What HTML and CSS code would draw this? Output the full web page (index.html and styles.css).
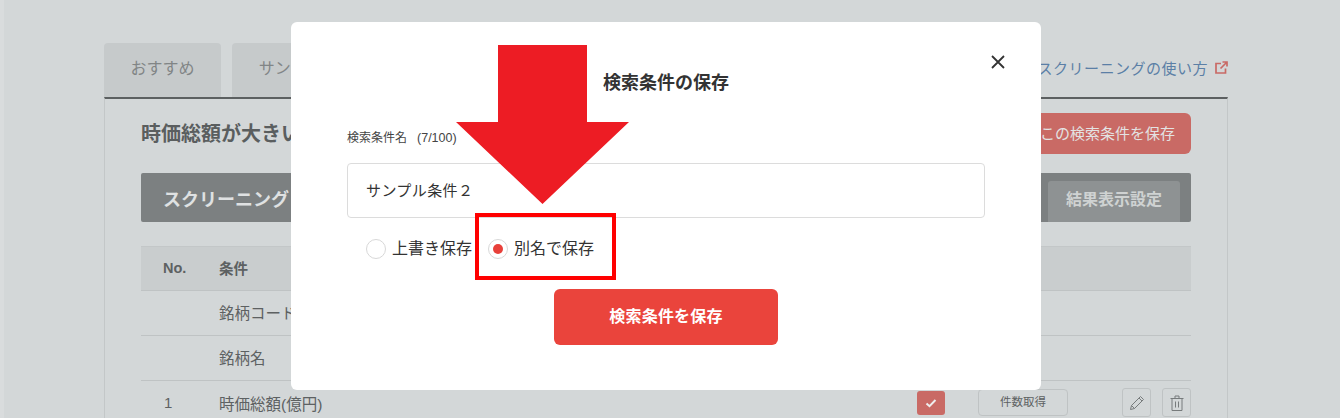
FILE: index.html
```html
<!DOCTYPE html>
<html lang="ja">
<head>
    <meta charset="UTF-8">
    <title>検索条件の保存</title>
    <link rel="stylesheet" href="styles.css">
</head>
<body>
    <div class="page">
        <div class="tabs-row">
            <div class="tab">おすすめ</div>
            <div class="tab tab-second">サンプル</div>
            <a class="howto">スクリーニングの使い方
                <svg class="howto-icon" viewBox="0 0 14 14" width="14" height="14"><path d="M7 2.500H2v9.500h9.500V7.500M8.500 1h4.500v4.500M13 1L6.500 7.500" fill="none" stroke="#c96a65" stroke-width="1.700"/></svg>
            </a>
        </div>
        <div class="panel">
            <div class="panel-head">
                <h2 class="panel-title">時価総額が大きい銘柄</h2>
                <button class="save-btn">この検索条件を保存</button>
            </div>
            <div class="bar">
                <span class="bar-title">スクリーニング 条件</span>
                <span class="bar-btn">結果表示設定</span>
            </div>
            <div class="row row-head">
                <span class="col-no">No.</span>
                <span class="col-name">条件</span>
            </div>
            <div class="row">
                <span class="col-no"></span>
                <span class="col-name">銘柄コード</span>
            </div>
            <div class="row">
                <span class="col-no"></span>
                <span class="col-name">銘柄名</span>
            </div>
            <div class="row row-last">
                <span class="col-no col-num">1</span>
                <span class="col-name">時価総額(億円)</span>
                <span class="check">
                    <svg viewBox="0 0 12 12" width="12" height="12"><path d="M1.500 6.500L4.500 9.200L10.500 3" fill="none" stroke="#eee" stroke-width="2"/></svg>
                </span>
                <span class="count-btn">件数取得</span>
                <span class="icon-btn">
                    <svg viewBox="0 0 18 18" width="18" height="18"><path d="M2.500 15.500L3.500 11.500L12.500 2.500L15.500 5.500L6.500 14.500ZM3.500 11.500L6.500 14.500M11 4L14 7" fill="none" stroke="#777b7c" stroke-width="1"/></svg>
                </span>
                <span class="icon-btn">
                    <svg viewBox="0 0 18 18" width="18" height="18"><path d="M2.500 4.500H15.500M7 4.500V2H11V4.500M4 4.500V16.500H14V4.500M7.500 7.500V13.500M10.500 7.500V13.500" fill="none" stroke="#777b7c" stroke-width="1"/></svg>
                </span>
            </div>
        </div>
    </div>

    <div class="modal">
        <button class="modal-close">
            <svg viewBox="0 0 14 14" width="14" height="14"><path d="M1 1L13 13M13 1L1 13" fill="none" stroke="#333" stroke-width="1.800"/></svg>
        </button>
        <h3 class="modal-title">検索条件の保存</h3>
        <label class="field-label">検索条件名<span class="field-count">(7/100)</span></label>
        <div class="field-input">サンプル条件２</div>
        <div class="radios">
            <label class="radio"><span class="radio-dot"></span><span class="radio-text">上書き保存</span></label>
            <label class="radio radio-on"><span class="radio-dot"></span><span class="radio-text">別名で保存</span></label>
        </div>
        <button class="modal-save">検索条件を保存</button>
    </div>

    <svg class="arrow" viewBox="0 0 176 162" width="176" height="162"><path d="M43 1H132V78H174L87.500 160L1 78H43Z" fill="#ed1c24"/></svg>
    <div class="highlight"></div>
</body>
</html>
```

FILE: styles.css
```css
* {
    box-sizing: border-box;
}

html, body {
    height: 100vh;
    margin: 0;
    overflow: hidden;
}

body {
    background-color: #d9dcdd;
    color: #5d6162;
    font-family: 'Liberation Sans', 'Noto Sans CJK JP', sans-serif;
    position: relative;
}

.page {
    background-color: #d3d7d8;
    height: 100%;
    margin-left: 4px;
    padding: 43px 112px 0 100px;
}

.tabs-row {
    display: flex;
    gap: 11px;
    height: 54px;
    position: relative;
}

.tab {
    background-color: #c6cacb;
    border-radius: 4px 4px 0 0;
    color: #818586;
    font-size: 16px;
    line-height: 52px;
    text-align: center;
    width: 117px;
}

.howto {
    align-items: center;
    color: #5b7fa6;
    display: flex;
    font-size: 15px;
    gap: 6px;
    height: 52px;
    letter-spacing: 0.5px;
    margin-left: auto;
    padding-bottom: 3px;
}

.panel {
    border-left: 1px solid #c3c7c8;
    border-right: 1px solid #c3c7c8;
    border-top: 2px solid #5c6061;
    height: 330px;
    padding: 14px 36px 0;
}

.panel-head {
    align-items: center;
    display: flex;
    height: 41px;
    justify-content: space-between;
}

.panel-title {
    color: #5a5e5f;
    font-size: 20px;
    margin: 0;
    padding-bottom: 2px;
}

.save-btn {
    background-color: #c96a65;
    border: none;
    border-radius: 6px;
    color: #e3e3e3;
    font-family: inherit;
    font-size: 15px;
    height: 41px;
    padding: 0 16px 3px 0;
    text-align: right;
    width: 260px;
}

.bar {
    align-items: flex-end;
    background-color: #7c8081;
    border-radius: 2px;
    display: flex;
    height: 49px;
    justify-content: space-between;
    margin-top: 19px;
    padding: 0 11px 0 22px;
}

.bar-title {
    align-self: center;
    color: #dfe1e2;
    font-size: 18px;
    font-weight: bold;
}

.bar-btn {
    background-color: #8e9293;
    border-radius: 3px 3px 0 0;
    color: #cfd2d2;
    font-size: 16px;
    font-weight: bold;
    height: 41px;
    line-height: 37px;
    text-align: center;
    width: 132px;
}

.row {
    align-items: center;
    border-bottom: 1px solid #bfc3c4;
    display: flex;
    font-size: 15.5px;
    height: 45px;
    padding-bottom: 3px;
}

.row-head {
    background-color: #c9cdce;
    border-top: 1px solid #c3c7c8;
    font-size: 14.5px;
    font-weight: bold;
    margin-top: 24px;
    padding-bottom: 2px;
}

.row-last {
    border-bottom: none;
    padding-bottom: 2px;
}

.col-no {
    padding-left: 22px;
    width: 78px;
}

.col-num {
    font-size: 15px;
    padding-left: 23px;
}

.col-name {
    flex: 1;
}

.check {
    align-items: center;
    background-color: #c96a65;
    border-radius: 3px;
    display: flex;
    height: 24px;
    justify-content: center;
    margin-top: 1px;
    width: 28px;
}

.count-btn {
    border: 1px solid #bfc3c4;
    border-radius: 4px;
    font-size: 11.5px;
    height: 27px;
    line-height: 25px;
    margin-left: 33px;
    text-align: center;
    width: 90px;
}

.icon-btn {
    align-items: center;
    border: 1px solid #bfc3c4;
    border-radius: 3px;
    display: flex;
    height: 29px;
    justify-content: center;
    margin-left: 11px;
    width: 29px;
}

.count-btn + .icon-btn {
    margin-left: 54px;
}

.modal {
    background-color: #fff;
    border-radius: 6px;
    display: flex;
    flex-direction: column;
    height: 368px;
    left: 291px;
    padding: 50px 56px 0;
    position: absolute;
    top: 22px;
    width: 750px;
}

.modal-close {
    background: none;
    border: none;
    height: 14px;
    padding: 0;
    position: absolute;
    right: 36px;
    top: 33px;
    width: 14px;
}

.modal-title {
    color: #333;
    font-size: 18px;
    line-height: 22px;
    margin: 0;
    text-align: center;
}

.field-label {
    color: #444;
    font-size: 12px;
    line-height: 16px;
    margin-top: 36px;
}

.field-count {
    font-size: 12.5px;
    margin-left: 10px;
}

.field-input {
    border: 1px solid #dcdcdc;
    border-radius: 4px;
    color: #333;
    font-size: 15px;
    height: 55px;
    letter-spacing: 0.4px;
    line-height: 53px;
    margin-top: 17px;
    padding-left: 18px;
    width: 638px;
}

.radios {
    display: flex;
    gap: 16px;
    margin-top: 21px;
    padding-left: 19px;
}

.radio {
    align-items: center;
    color: #333;
    display: flex;
    font-size: 16px;
    gap: 6px;
    height: 20px;
}

.radio-text {
    margin-top: -4px;
}

.radio-dot {
    background-color: #fff;
    border: 1px solid #d8d8d8;
    border-radius: 50%;
    display: block;
    height: 20px;
    position: relative;
    width: 20px;
}

.radio-on .radio-dot::after {
    background-color: #e8403a;
    border-radius: 50%;
    content: '';
    height: 10px;
    left: 4px;
    position: absolute;
    top: 4px;
    width: 10px;
}

.modal-save {
    align-self: center;
    background-color: #ea443c;
    border: none;
    border-radius: 6px;
    color: #fff;
    font-family: inherit;
    font-size: 16px;
    font-weight: bold;
    height: 56px;
    letter-spacing: 0.2px;
    margin-top: 30px;
    padding-bottom: 5px;
    width: 224px;
}

.arrow {
    left: 455px;
    position: absolute;
    top: 44px;
}

.highlight {
    border: 4px solid #f00;
    height: 67px;
    left: 475px;
    position: absolute;
    top: 213px;
    width: 141px;
}
```
